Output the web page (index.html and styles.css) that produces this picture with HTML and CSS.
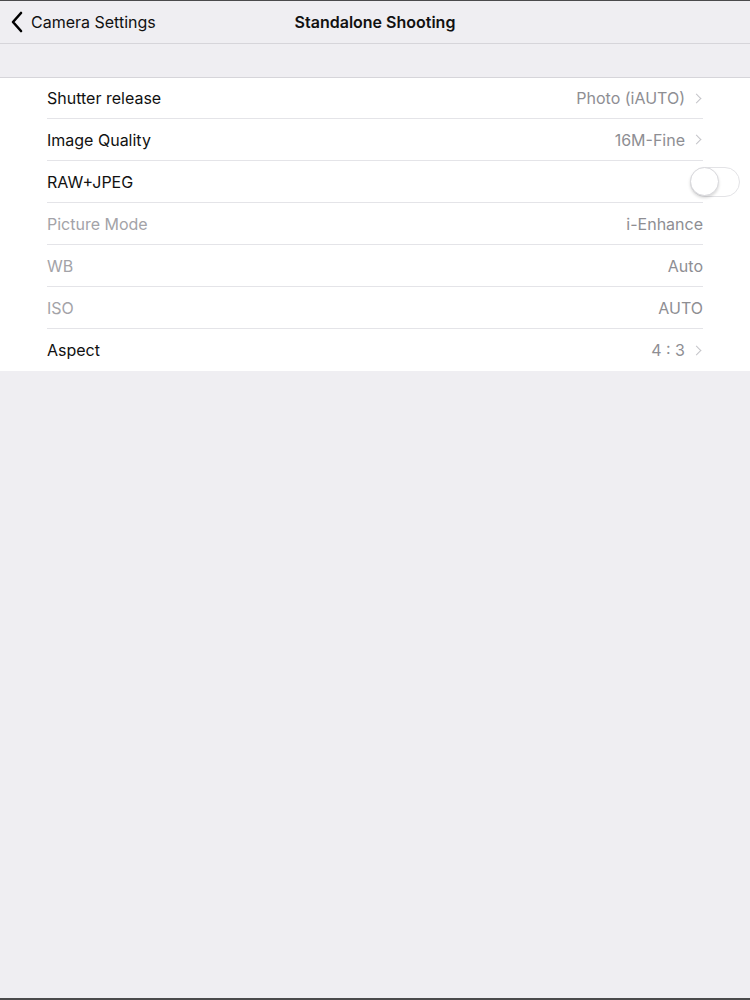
FILE: index.html
```html
<!DOCTYPE html>
<html lang="en">
<head>
    <meta charset="UTF-8">
    <meta name="viewport" content="width=device-width, initial-scale=1.0">
    <title>Standalone Shooting</title>
    <link rel="stylesheet" href="styles.css">
</head>
<body>
    <div class="screen">
        <header class="navbar">
            <a class="back" href="#">
                <svg class="back-icon" width="14" height="22" viewBox="0 0 14 22">
                    <path d="M11 2 L3 11 L11 20" fill="none" stroke="#000" stroke-width="2.6" stroke-linecap="round" stroke-linejoin="round"/>
                </svg>
                <span>Camera Settings</span>
            </a>
            <h1 class="title">Standalone Shooting</h1>
        </header>

        <div class="spacer"></div>

        <ul class="table">
            <li class="row">
                <span class="label">Shutter release</span>
                <span class="value">Photo (iAUTO)<i class="chevron"></i></span>
            </li>
            <li class="row">
                <span class="label">Image Quality</span>
                <span class="value">16M-Fine<i class="chevron"></i></span>
            </li>
            <li class="row">
                <span class="label">RAW+JPEG</span>
                <span class="switch"><span class="knob"></span></span>
            </li>
            <li class="row disabled">
                <span class="label">Picture Mode</span>
                <span class="value">i-Enhance</span>
            </li>
            <li class="row disabled">
                <span class="label">WB</span>
                <span class="value">Auto</span>
            </li>
            <li class="row disabled">
                <span class="label">ISO</span>
                <span class="value">AUTO</span>
            </li>
            <li class="row">
                <span class="label">Aspect</span>
                <span class="value">4 : 3<i class="chevron"></i></span>
            </li>
        </ul>
    </div>
</body>
</html>
```

FILE: styles.css
```css
:root {
    --bg-color: #efeef2;
    --line-color: #d6d5da;
    --text-color: #111;
    --muted-color: #8e8e93;
}

* {
    box-sizing: border-box;
}

html, body {
    margin: 0;
    height: 100%;
}

body {
    font-family: 'Inter', 'Roboto', sans-serif;
    background-color: #4a4a4c;
    color: var(--text-color);
}

.screen {
    height: 1000px;
    margin: 0;
    border-top: 1px solid #4a4a4c;
    border-bottom: 2px solid #4a4a4c;
    background-color: var(--bg-color);
}

.navbar {
    position: relative;
    height: 43px;
    border-bottom: 1px solid var(--line-color);
    display: flex;
    align-items: center;
    justify-content: center;
}

.back {
    position: absolute;
    left: 10px;
    top: 0;
    bottom: 0;
    display: flex;
    align-items: center;
    gap: 7px;
    color: #111;
    text-decoration: none;
    font-size: 16px;
}

.back-icon {
    display: block;
}

.title {
    margin: 0;
    font-size: 16px;
    font-weight: 600;
}

.spacer {
    height: 34px;
    border-bottom: 1px solid var(--line-color);
}

.table {
    list-style: none;
    margin: 0;
    padding: 0 0 0 47px;
    background-color: #fff;
}

.row {
    height: 42px;
    display: flex;
    align-items: center;
    justify-content: space-between;
    margin-right: 47px;
    border-bottom: 1px solid #e4e4e8;
    font-size: 16px;
}

.row:first-child {
    height: 41px;
}

.row:last-child {
    border-bottom: none;
}

.value {
    display: flex;
    align-items: center;
    color: var(--muted-color);
}

.row.disabled .label {
    color: #a3a3a8;
}

.row.disabled .value {
    color: var(--muted-color);
}

.chevron {
    display: inline-block;
    width: 7px;
    height: 7px;
    margin-left: 8px;
    margin-right: 3px;
    border-top: 1.5px solid #c4c4c9;
    border-right: 1.5px solid #c4c4c9;
    transform: rotate(45deg);
}

.switch {
    position: relative;
    width: 50px;
    height: 30px;
    margin-right: -37px;
    border: 1.5px solid #e3e3e6;
    border-radius: 15px;
    background-color: #fff;
}

.knob {
    position: absolute;
    left: -1px;
    top: -1px;
    width: 29px;
    height: 29px;
    border-radius: 50%;
    background-color: #fff;
    border: 1px solid #d8d8dc;
    box-shadow: 0 2px 3px rgba(0, 0, 0, 0.15);
}
```
